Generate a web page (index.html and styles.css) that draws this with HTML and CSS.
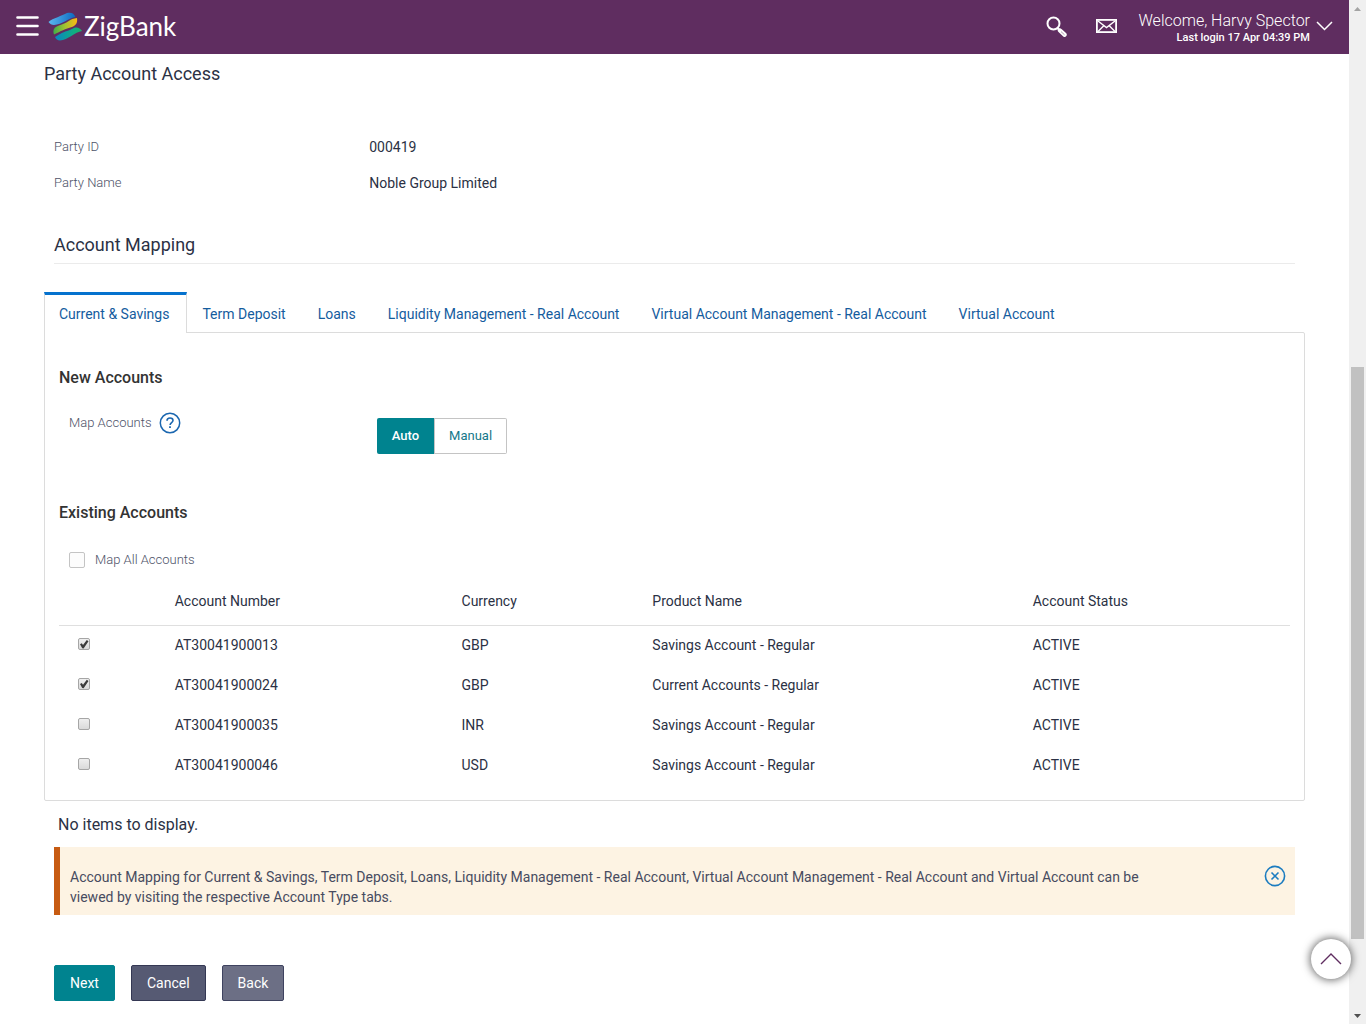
FILE: index.html
```html
<!DOCTYPE html>
<html lang="en">
<head>
<meta charset="utf-8">
<meta name="viewport" content="width=device-width, initial-scale=1">
<title>ZigBank - Party Account Access</title>
<link rel="stylesheet" href="styles.css">
</head>
<body>
<div class="shell">
  <div class="page">
    <header class="topbar">
      <button class="icon-btn" type="button" aria-label="Menu">
        <svg width="23" height="20" viewBox="0 0 23 20"><path d="M1.500 1.500h20M1.500 10h20M1.500 18.500h20" stroke="#fff" stroke-width="2.600" stroke-linecap="round"/></svg>
      </button>
      <a class="brand" href="#">
        <svg width="34" height="29" viewBox="0 0 34 29">
          <defs>
            <linearGradient id="blue"><stop offset="0" stop-color="#5cb8ee"/><stop offset="1" stop-color="#0b68c0"/></linearGradient>
            <linearGradient id="lime"><stop offset="0" stop-color="#3fae49"/><stop offset=".5" stop-color="#a5c32f"/><stop offset="1" stop-color="#fdb913"/></linearGradient>
            <linearGradient id="teal"><stop offset="0" stop-color="#0a84c6"/><stop offset=".7" stop-color="#0fae83"/><stop offset="1" stop-color="#1fae6a"/></linearGradient>
          </defs>
          <path d="M.500 10C5 6 14 4 19 1C23 0 26 1 27.500 5C21 6 14 12.500 6 13C3.500 13 2 12 .500 10Z" fill="url(#blue)"/>
          <path d="M6 22.500C4.500 18 6 15 11 13.500C19 11.500 22 6.500 29 6C29.500 10 29 13 24 15C17 17 13 19 6 22.500Z" fill="url(#lime)"/>
          <path d="M7 25C12 22 14 20.500 19 19C24 17.500 26 15 29 15.500C31 16 33 17 34 19C27 20 20 28 12 28.500C9.500 28.500 8 27 7 25Z" fill="url(#teal)"/>
        </svg>
        <span>ZigBank</span>
      </a>
      <div class="tools">
        <button class="icon-btn" type="button" aria-label="Search">
          <svg width="21" height="21" viewBox="0 0 21 21" fill="none" stroke="#fff"><circle cx="7.500" cy="7.500" r="6" stroke-width="2"/><path d="M11.500 12l3 3" stroke-width="2.200"/><path d="M14 14.500l4.500 4.200" stroke-width="4.400" stroke-linecap="round"/><path d="M15 15.600l3.500 3.200" stroke="#8d6a8e" stroke-width=".7"/></svg>
        </button>
        <button class="icon-btn" type="button" aria-label="Messages">
          <svg width="21" height="14" viewBox="0 0 21 14" fill="none" stroke="#fff" stroke-width="1.400"><rect x=".9" y=".9" width="19.200" height="12.200" stroke-width="1.800"/><path d="M2 2l8.500 6.500L19 2M2 12.500l6-6M19 12.500l-6-6"/></svg>
        </button>
        <button class="user" type="button">
          <span class="user-text"><span class="welcome">Welcome, Harvy Spector</span><span class="login">Last login 17 Apr 04:39 PM</span></span>
          <svg width="17" height="10" viewBox="0 0 17 10"><path d="M1 1l7.500 7.500L16 1" fill="none" stroke="#fff" stroke-width="1.500"/></svg>
        </button>
      </div>
    </header>

    <main class="content">
      <h1 class="title">Party Account Access</h1>

      <dl class="facts">
        <div class="row"><dt>Party ID</dt><dd>000419</dd></div>
        <div class="row"><dt>Party Name</dt><dd>Noble Group Limited</dd></div>
      </dl>

      <h2 class="section">Account Mapping</h2>

      <nav class="tabs">
        <a class="tab active" href="#" aria-current="page">Current &amp; Savings</a>
        <a class="tab" href="#">Term Deposit</a>
        <a class="tab" href="#">Loans</a>
        <a class="tab" href="#">Liquidity Management - Real Account</a>
        <a class="tab" href="#">Virtual Account Management - Real Account</a>
        <a class="tab" href="#">Virtual Account</a>
      </nav>

      <section class="panel">
        <h3 class="sub">New Accounts</h3>
        <div class="row map-row">
          <div class="map-label">
            <span>Map Accounts</span>
            <button class="icon-btn" type="button" aria-label="Help">
              <svg width="22" height="22" viewBox="0 0 22 22" fill="none" stroke="#1b67b0"><circle cx="11" cy="11" r="9.700" stroke-width="1.500"/><path d="M8 8.800C8 6.800 9.300 6 11 6s3 .9 3 2.500c0 2-2.900 2.300-2.900 4.400" stroke-width="1.600"/><path d="M11 14.300v1.800" stroke-width="1.800"/></svg>
            </button>
          </div>
          <div class="map-choice">
            <div class="toggle" role="group" aria-label="Map Accounts">
              <button class="option on" type="button" aria-pressed="true">Auto</button>
              <button class="option" type="button" aria-pressed="false">Manual</button>
            </div>
          </div>
        </div>

        <h3 class="sub">Existing Accounts</h3>
        <label class="all"><input class="box" type="checkbox"><span>Map All Accounts</span></label>

        <table class="accounts">
          <colgroup><col class="c-pick"><col class="c-number"><col class="c-currency"><col class="c-product"><col class="c-status"></colgroup>
          <thead>
            <tr><th></th><th scope="col">Account Number</th><th scope="col">Currency</th><th scope="col">Product Name</th><th scope="col">Account Status</th></tr>
          </thead>
          <tbody>
            <tr><td><input class="tick" type="checkbox" aria-label="AT30041900013" checked></td><td>AT30041900013</td><td>GBP</td><td>Savings Account - Regular</td><td>ACTIVE</td></tr>
            <tr><td><input class="tick" type="checkbox" aria-label="AT30041900024" checked></td><td>AT30041900024</td><td>GBP</td><td>Current Accounts - Regular</td><td>ACTIVE</td></tr>
            <tr><td><input class="tick" type="checkbox" aria-label="AT30041900035"></td><td>AT30041900035</td><td>INR</td><td>Savings Account - Regular</td><td>ACTIVE</td></tr>
            <tr><td><input class="tick" type="checkbox" aria-label="AT30041900046"></td><td>AT30041900046</td><td>USD</td><td>Savings Account - Regular</td><td>ACTIVE</td></tr>
          </tbody>
        </table>
      </section>

      <p class="empty">No items to display.</p>

      <div class="notice">
        <p>Account Mapping for Current &amp; Savings, Term Deposit, Loans, Liquidity Management - Real Account, Virtual Account Management - Real Account and Virtual Account can be viewed by visiting the respective Account Type tabs.</p>
        <button class="icon-btn" type="button" aria-label="Close">
          <svg width="22" height="22" viewBox="0 0 22 22" fill="none" stroke="#1c7cc0" stroke-width="1.600"><circle cx="11" cy="11" r="9.600"/><path d="M7.500 7.500l7 7M14.500 7.500l-7 7"/></svg>
        </button>
      </div>

      <div class="actions">
        <button class="btn next" type="button">Next</button>
        <button class="btn cancel" type="button">Cancel</button>
        <button class="btn back" type="button">Back</button>
      </div>
    </main>
  </div>

  <div class="scrollbar" aria-hidden="true">
    <svg width="7" height="4" viewBox="0 0 7 4"><path d="M0 4h7L3.500 0z" fill="#a3a3a3"/></svg>
    <div class="track"><div class="thumb"></div></div>
    <svg width="7" height="4" viewBox="0 0 7 4"><path d="M0 0h7L3.500 4z" fill="#505050"/></svg>
  </div>

  <button class="to-top" type="button" aria-label="Back to top">
    <svg width="22" height="12" viewBox="0 0 22 12"><path d="M1 11L11 1l10 10" fill="none" stroke="#5f2d60" stroke-width="1.400"/></svg>
  </button>
</div>
</body>
</html>
```
FILE: styles.css
```css
* { box-sizing: border-box; }

body {
  margin: 0;
  background: #fff;
  color: #2b3144;
  font: 14px/20px Roboto, "Liberation Sans", sans-serif;
}

h1, h2, h3, p, dl, dd { margin: 0; }
button { font: inherit; cursor: pointer; }
svg { display: block; flex: none; }
a { text-decoration: none; }

.shell { position: relative; display: flex; min-height: 100vh; }
.page { flex: 1; min-width: 0; }

.icon-btn { padding: 0; border: 0; background: none; }

/* Top bar */
.topbar {
  display: flex;
  align-items: center;
  height: 54px;
  padding: 0 16px 2px;
  background: #5f2d60;
  color: #fff;
}
.brand {
  display: flex;
  align-items: center;
  gap: 2px;
  margin-left: 9px;
  color: #fff;
  font: 26px/32px Lato, sans-serif;
}
.tools { display: flex; align-items: center; gap: 29px; margin-left: auto; }
.user {
  display: flex;
  align-items: center;
  gap: 6px;
  padding: 0;
  margin-left: -7px;
  border: 0;
  background: none;
  color: #fff;
}
.user-text { display: flex; flex-direction: column; padding-top: 6px; text-align: right; }
.welcome { font-size: 16px; line-height: 18px; font-weight: 300; }
.login { font-size: 11px; line-height: 16px; font-weight: 500; }

/* Content */
.content { padding: 10px 44px 24px; }
.title { font-size: 18px; line-height: 20px; font-weight: 400; }

.row { display: grid; grid-template-columns: 1fr 3fr; }
.row > * { padding: 0 10px; }
.facts { display: grid; gap: 16px; padding: 53px 0 40px; }
.facts dt { font-size: 13px; font-weight: 300; color: #4d5268; }

.section {
  margin: 0 10px 28px;
  padding-bottom: 6px;
  border-bottom: 1px solid #ebebeb;
  font-size: 18px;
  line-height: 24px;
  font-weight: 400;
}

.tabs { display: flex; margin-bottom: -1px; }
.tab {
  padding: 12px 17px 9px 15px;
  color: #145c9e;
}
.tab.active {
  padding: 9px 17px 9px 14px;
  border: 1px solid #dcdcdc;
  border-top: 3px solid #0572ce;
  border-bottom: 0;
  background: #fff;
}

.panel {
  padding: 33px 14px 15px;
  border: 1px solid #dcdcdc;
  border-radius: 0 2px 2px 2px;
}
.sub { font-size: 16px; line-height: 24px; font-weight: 500; color: #333; }
.map-row { padding: 22px 0 47px; }
.map-label {
  display: flex;
  align-items: center;
  align-self: start;
  gap: 8px;
  font-size: 13px;
  font-weight: 300;
  color: #4d5268;
}
.row > .map-choice { padding-top: 6px; }
.toggle { display: flex; }
.option {
  height: 36px;
  padding: 0 14px;
  border: 1px solid #c4c4c4;
  border-left: 0;
  border-radius: 0 2px 2px 0;
  background: #fff;
  color: #16788a;
  font-size: 13px;
}
.option.on {
  padding: 0 15px;
  border: 0;
  border-right: 1px solid #c4c4c4;
  border-radius: 2px 0 0 2px;
  background: #00838f;
  color: #fff;
  font-weight: 500;
}

.all {
  display: flex;
  align-items: center;
  gap: 10px;
  width: max-content;
  margin: 25px 10px 12px;
  font-size: 13px;
  font-weight: 300;
  color: #4d5268;
}
.box {
  appearance: none;
  width: 16px;
  height: 16px;
  margin: 0;
  border: 1px solid #c4c4c4;
  border-radius: 2px;
  background: #fcfcfc;
}

.accounts { width: 100%; table-layout: fixed; border-collapse: collapse; }
.accounts th {
  height: 43px;
  padding: 0 0 4px;
  text-align: left;
  font-weight: 400;
  border-bottom: 1px solid #dfdfdf;
}
.accounts td { height: 40px; padding: 0; }
.c-pick { width: 9.4%; }
.c-number { width: 23.3%; }
.c-currency { width: 15.5%; }
.c-product { width: 30.9%; }
.c-status { width: 20.9%; }

.tick {
  appearance: none;
  display: block;
  width: 12px;
  height: 12px;
  margin: 0 19px 2px;
  border: 1px solid #a6a6a6;
  border-radius: 2px;
  background: linear-gradient(#efefef, #dadada);
}
.tick:checked::before {
  content: "";
  display: block;
  width: 10px;
  height: 10px;
  background: #3b3b3b;
  clip-path: polygon(10% 50%, 28% 40%, 40% 58%, 78% 8%, 95% 20%, 46% 92%, 32% 90%);
}

.empty { padding: 14px; font-size: 16px; }

.notice {
  display: flex;
  align-items: flex-start;
  justify-content: space-between;
  margin: -2px 10px 0;
  padding: 20px 9px 8px 10px;
  border-left: 6px solid #c75b12;
  background: #fdf3e3;
  color: #474b60;
}
.notice p { flex: 0 1 1100px; }
.notice .icon-btn { margin-top: -2px; }

.actions { display: flex; gap: 16px; margin: 50px 10px 0; }
.btn {
  height: 36px;
  padding: 0 15px;
  border: 1px solid;
  border-radius: 2px;
  color: #fff;
}
.next { background: #00838f; border-color: #00838f; }
.cancel { background: #565a73; border-color: #343854; }
.back { background: #6c6f85; border-color: #3f4360; }

/* Scroll gutter */
.scrollbar {
  display: flex;
  flex-direction: column;
  align-items: center;
  justify-content: space-between;
  width: 17px;
  padding: 7px 2px;
  background: #f0f0f0;
}
.track { flex: 1; width: 13px; display: flex; flex-direction: column; margin: 6px 0; }
.track::before { content: ""; flex: 350; }
.track::after { content: ""; flex: 69; }
.thumb { flex: 571; background: #c1c1c1; }

.to-top {
  position: absolute;
  right: 15px;
  bottom: 46px;
  display: grid;
  place-items: center;
  width: 40px;
  height: 40px;
  padding: 0;
  border: 0;
  border-radius: 50%;
  background: #fff;
  box-shadow: 0 0 8px 1px #666;
}
```
